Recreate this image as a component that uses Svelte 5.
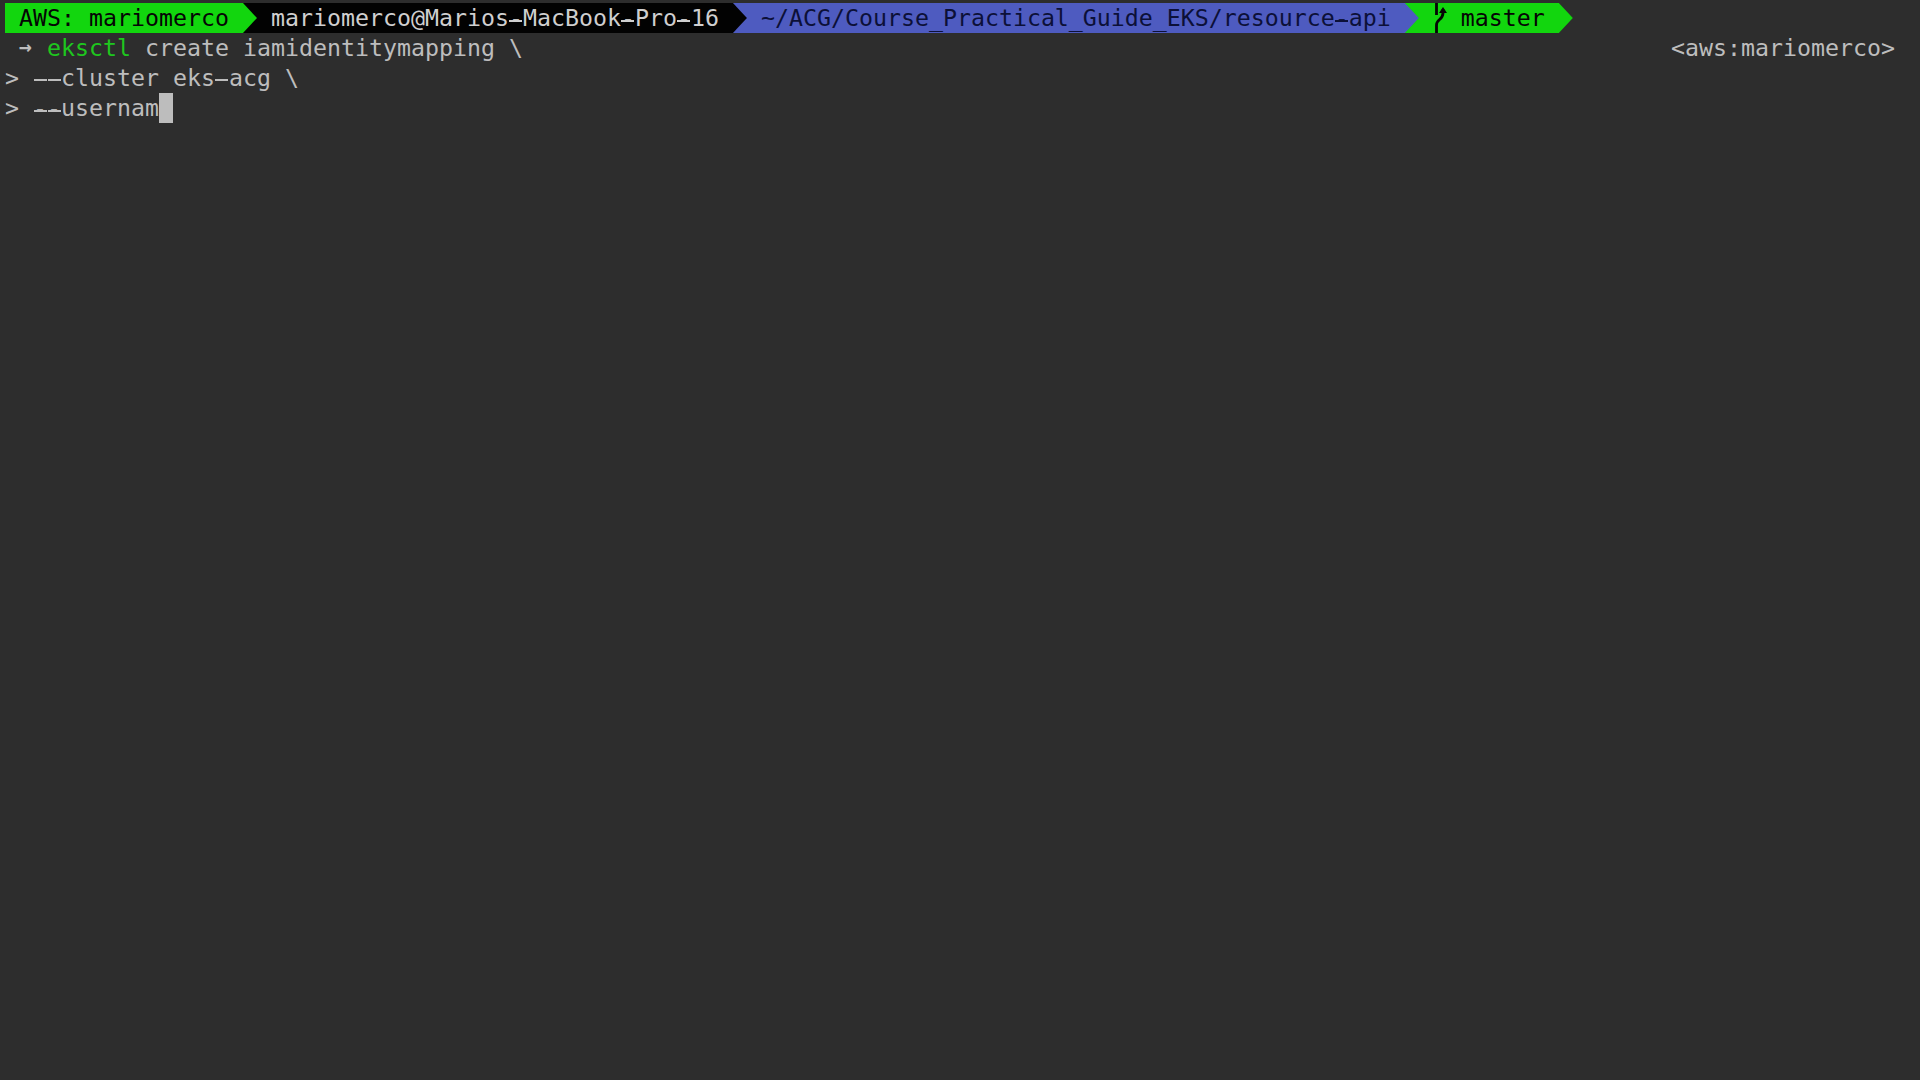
<script>
  const segments = [
    { text: 'AWS: mariomerco', cls: 'green' },
    { text: 'mariomerco@Marios-MacBook-Pro-16', cls: 'black' },
    { text: '~/ACG/Course_Practical_Guide_EKS/resource-api', cls: 'blue' },
    { text: 'master', cls: 'green', branch: true }
  ];
</script>

<!-- the terminal font draws hyphens almost as wide as the cell, DejaVu doesn't -->
{#snippet mono(text)}{#each text.split(/(-)/) as part}{#if part === '-'}<span class="dash">-</span>{:else}{part}{/if}{/each}{/snippet}

<div class="terminal">
  <div class="powerline">
    {#each segments as seg, i}
      <div class="seg {seg.cls}">
        {#if seg.branch}
          <svg class="branch" width="14" height="30" viewBox="0 0 14 30" aria-hidden="true">
            <path d="M3.5 0V12M3.5 30V22C3.5 16 10 17 10 10V6" fill="none" stroke="#050505" stroke-width="2.8" />
            <path d="M6 10L10 4L14 10Z" fill="#050505" />
          </svg>
        {/if}
        <span>{@render mono(seg.text)}</span>
      </div>
      <div class="tip {segments[i + 1]?.cls ?? 'none'}"><span class={seg.cls}></span></div>
    {/each}
  </div>

  <div class="row spread">
    <div class="prompt"><span class="arrow">→</span><span class="cmd">eksctl</span> create iamidentitymapping \</div>
    <div>&lt;aws:mariomerco&gt;</div>
  </div>
  <div class="row">&gt; {@render mono('--cluster eks-acg \\')}</div>
  <div class="row"><span>&gt; {@render mono('--usernam')}</span><span class="cursor"></span></div>
</div>

<style>
  :global(body) {
    background: #2d2d2d;
  }
  .terminal {
    min-height: 1080px;
    box-sizing: border-box;
    padding: 3px 25px 0 5px;
    background: #2d2d2d;
    color: #bdbdbd;
    font-family: "DejaVu Sans Mono", monospace;
    font-size: 23.25px;
    line-height: 30px;
  }
  .powerline {
    display: flex;
    height: 30px;
    color: #050505;
  }
  .seg {
    display: flex;
    padding: 0 14px;
    white-space: pre;
  }
  .seg.black {
    color: #cfcfcf;
  }
  .seg.blue {
    color: #0c1038;
  }
  .branch {
    margin-right: 14px;
  }
  .green {
    background: #12d60e;
  }
  .black {
    background: #020202;
  }
  .blue {
    background: #4e5bc0;
  }
  .tip {
    width: 14px;
    height: 30px;
  }
  .tip span {
    display: block;
    width: 14px;
    height: 30px;
    clip-path: polygon(0 0, 100% 50%, 0 100%);
  }
  .row {
    display: flex;
    height: 30px;
    white-space: pre;
  }
  .spread {
    justify-content: space-between;
  }
  .prompt {
    padding-left: 14px;
  }
  .arrow {
    display: inline-block;
    width: 28px;
    font-size: 21.5px;
    font-weight: bold;
    line-height: 1;
    vertical-align: 2px;
  }
  .cmd {
    color: #1ec71e;
  }
  .dash {
    position: relative;
  }
  .dash::after {
    content: "";
    position: absolute;
    left: 0.5px;
    right: 0.5px;
    top: 16px;
    height: 2px;
    background: currentColor;
  }
  .cursor {
    width: 14px;
    height: 30px;
    background: #bdbdbd;
  }
</style>
